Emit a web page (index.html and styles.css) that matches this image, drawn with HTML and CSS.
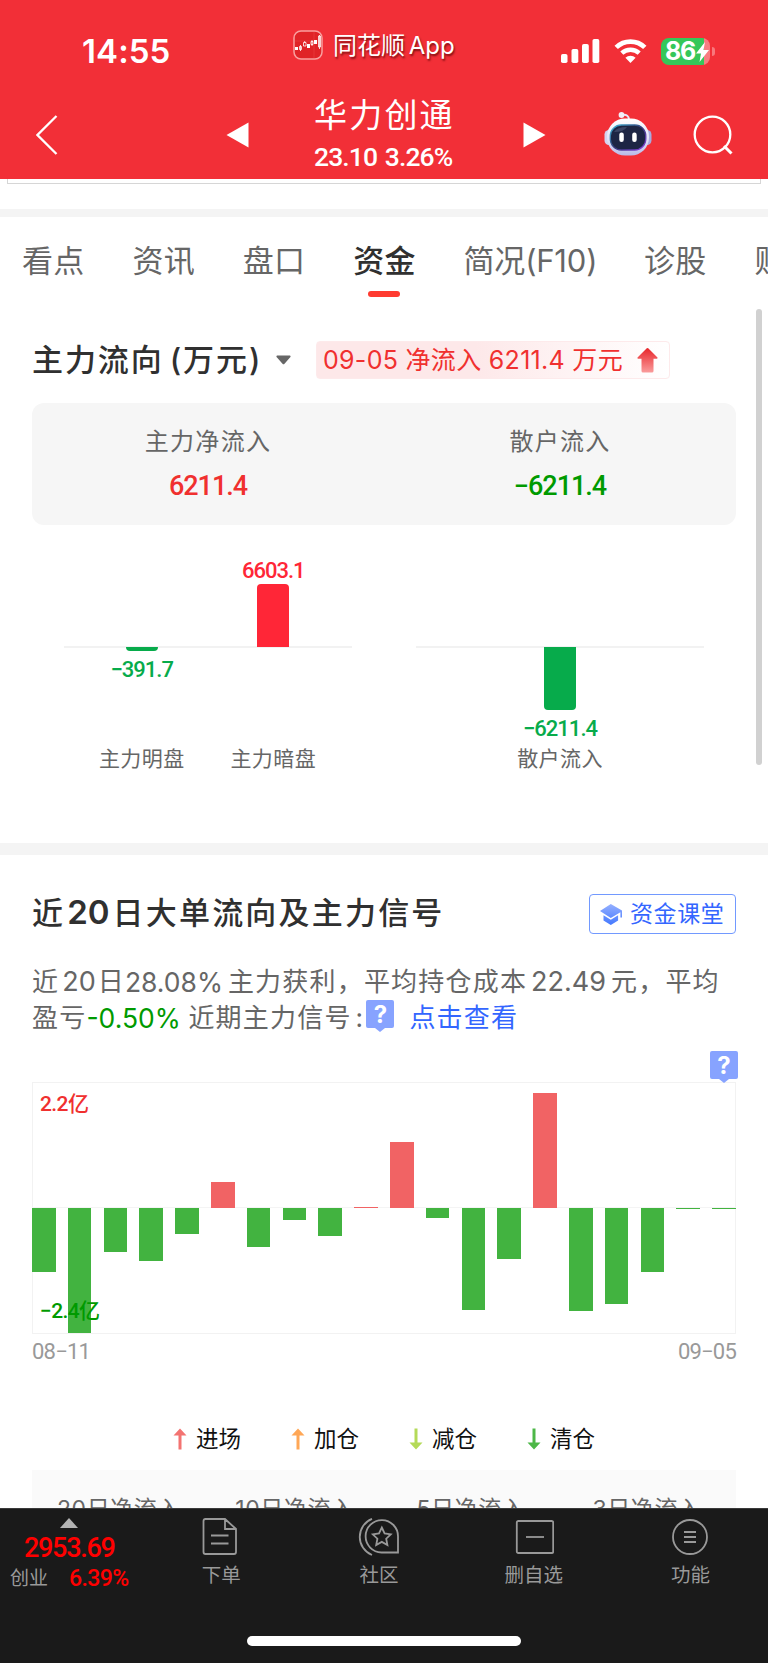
FILE: index.html
```html
<!DOCTYPE html>
<html lang="zh-CN">
<head>
  <meta charset="UTF-8" />
  <meta name="viewport" content="width=device-width, initial-scale=1.0"/>
  <title>华力创通 - 资金</title>
  <link rel="stylesheet" href="styles.css">
</head>
<body>

  <div class="header">
    <div class="status">
      <div class="time">14:55</div>
      <div class="app">
        <svg class="app-icon" width="30" height="30" viewBox="0 0 30 30">
          <rect x="1" y="1" width="28" height="28" rx="7" fill="#e02327" stroke="#f9a09f" stroke-width="1.5"/>
          <path d="M2 11H28M21 2V28" stroke="#ee4a48" stroke-width=".5"/>
          <path d="M2 17h3v3H2zM14 14h3v4h-3zM21 10h3v4h-3z" fill="#fff"/>
          <path d="M6.500 16.500h2v3h-2zM7.500 15v6M10.500 12.500h2.500v3.500h-2.500zM11.700 11v1.500M18 11.500h2v3h-2zM19 10v6M25.500 6h2v11h-2zM26.500 5v14" fill="none" stroke="#fff" stroke-width=".8"/>
        </svg>
        <span>同花顺 App</span>
      </div>
      <div class="signals">
        <svg width="39" height="26" viewBox="0 0 39 26" fill="#fff">
          <rect x="0" y="16" width="6.500" height="9" rx="1.800"/>
          <rect x="10.500" y="11" width="6.800" height="14" rx="1.800"/>
          <rect x="21" y="6" width="6.800" height="19" rx="1.800"/>
          <rect x="31.500" y="1" width="6.800" height="24" rx="1.800"/>
        </svg>
        <svg class="wifi" width="33" height="26" viewBox="0 0 33 26">
          <path d="M2.200 9.400a20.500 20.500 0 0 1 28.600 0" fill="none" stroke="#fff" stroke-width="4.800"/>
          <path d="M7.800 15.200a12.600 12.600 0 0 1 17.400 0" fill="none" stroke="#fff" stroke-width="4.400"/>
          <path d="M16.500 25l-5.100-5.200a7.300 7.300 0 0 1 10.200 0z" fill="#fff"/>
        </svg>
        <div class="battery">
          <span>86</span>
          <svg width="13" height="20" viewBox="0 0 13 20"><path d="M9 0L0 11.500h5L3.500 20 13 8H7.500z" fill="#fff"/></svg>
        </div>
        <div class="battery-tip"></div>
      </div>
    </div>

    <div class="nav">
      <svg class="back" width="22" height="40" viewBox="0 0 22 40"><path d="M20.500 1L1.500 20l19 19" fill="none" stroke="#fff" stroke-width="2.300"/></svg>
      <svg class="prev" width="23" height="26" viewBox="0 0 23 26"><path d="M22.500 .5v25L.5 13z" fill="#fff"/></svg>
      <div class="stock">
        <div class="stock-name">华力创通</div>
        <div class="stock-price">23.10 3.26%</div>
      </div>
      <svg class="next" width="23" height="26" viewBox="0 0 23 26"><path d="M.5 .5v25L22.500 13z" fill="#fff"/></svg>
      <svg class="robot" width="48" height="44" viewBox="0 0 48 44">
        <defs>
          <linearGradient id="shell" x1="0" y1="0" x2="0" y2="1">
            <stop offset="0" stop-color="#fff"/><stop offset=".6" stop-color="#dfe0f6"/><stop offset="1" stop-color="#b9b9e8"/>
          </linearGradient>
          <linearGradient id="rim" x1="0" y1="0" x2="1" y2="1">
            <stop offset="0" stop-color="#3fb8d8"/><stop offset=".5" stop-color="#343a78"/><stop offset="1" stop-color="#8a3fe0"/>
          </linearGradient>
        </defs>
        <path d="M18 3q7-1 7 5" fill="none" stroke="#e8e6f6" stroke-width="2"/>
        <circle cx="17.500" cy="3" r="2.900" fill="#f3eff8"/>
        <rect x=".5" y="18" width="9" height="15" rx="4.500" fill="#d4d2f0"/>
        <rect x="38.500" y="18" width="9" height="15" rx="4.500" fill="#aaaade"/>
        <rect x="3" y="6.500" width="42" height="37" rx="18" fill="url(#shell)"/>
        <rect x="6.300" y="13" width="35.500" height="25" rx="11" fill="#1d2544" stroke="url(#rim)" stroke-width="1.300"/>
        <path d="M10 20q3-5 13-5-3 5-13 5z" fill="#3b4565"/>
        <rect x="15.300" y="20.500" width="4.500" height="9.500" rx="2.200" fill="#fff"/>
        <rect x="28.200" y="20.500" width="4.500" height="9.500" rx="2.200" fill="#fff"/>
      </svg>
      <svg class="search" width="40" height="40" viewBox="0 0 40 40" fill="none" stroke="#fff">
        <circle cx="19.500" cy="19.500" r="17.800" stroke-width="2.300"/>
        <path d="M31 31L38.500 38.500" stroke-width="3"/>
      </svg>
    </div>
  </div>

  <div class="content">
    <div class="strip"></div>

    <div class="tabs">
      <span>看点</span>
      <span>资讯</span>
      <span>盘口</span>
      <span class="active">资金</span>
      <span class="wide">简况(F10)</span>
      <span>诊股</span>
      <span>财务</span>
    </div>

    <div class="section flow">
      <div class="flow-title">
        <h2>主力流向 (万元)</h2>
        <svg class="caret" width="15" height="10" viewBox="0 0 15 10"><path d="M1 .5h13q1.200 1 0 2L8.500 8.800q-1 1-2 0L1 2.500q-1.200-1 0-2z" fill="#666"/></svg>
        <div class="tag">
          <span>09-05 净流入 6211.4 万元</span>
          <svg width="21" height="25" viewBox="0 0 21 25">
            <defs><linearGradient id="up" x1="0" y1="0" x2="0" y2="1"><stop offset="0" stop-color="#e8252a"/><stop offset="1" stop-color="#fa9c9c"/></linearGradient></defs>
            <path d="M10.500 0q.6 0 1 .5l9 9q.4 1-.6 1.200H16.500V23q0 1.500-1.500 1.500H6Q4.500 24.500 4.500 23V10.700H1q-1-.2-.5-1.200l9-9q.4-.5 1-.5z" fill="url(#up)"/>
          </svg>
        </div>
      </div>

      <div class="card">
        <div>
          <p>主力净流入</p>
          <strong class="red">6211.4</strong>
        </div>
        <div>
          <p>散户流入</p>
          <strong class="green">−6211.4</strong>
        </div>
      </div>

      <div class="panels">
        <div class="panel">
          <div class="ups">
            <div></div>
            <div><span>6603.1</span><i style="height:63px"></i></div>
          </div>
          <div class="downs">
            <div><i style="height:4px"></i><span>−391.7</span></div>
            <div></div>
          </div>
          <div class="names"><div>主力明盘</div><div>主力暗盘</div></div>
        </div>
        <div class="panel">
          <div class="ups"></div>
          <div class="downs">
            <div><i style="height:63px"></i><span>−6211.4</span></div>
          </div>
          <div class="names"><div>散户流入</div></div>
        </div>
      </div>
    </div>

    <div class="section orders">
      <div class="orders-title">
        <h2>近<b class="num">20</b>日大单流向及主力信号</h2>
        <div class="lesson">
          <svg width="22" height="21" viewBox="0 0 22 21">
            <defs><linearGradient id="cap" x1="0" y1="0" x2="0" y2="1"><stop offset="0" stop-color="#95b0ff"/><stop offset="1" stop-color="#4378ff"/></linearGradient></defs>
            <path d="M10.800 0L22 6.500v7h-1.600V8.200L10.800 14 0 7z M3.500 11.300l7.300 4.400 7.300-4.400v5.200L10.800 21l-7.300-4.500z" fill="url(#cap)"/>
          </svg>
          <span>资金课堂</span>
        </div>
      </div>

      <div class="summary">
        <div>近<span class="num">20</span>日<span class="percent">28.08%</span>主力获利，平均持仓成本<span class="num cost">22.49</span>元，平均</div>
        <div>盈亏<span class="loss">-0.50%</span><span class="recent">近期主力信号<i>:</i></span><span class="help">?</span><a>点击查看</a></div>
      </div>

      <div class="chart">
        <span class="help chart-help">?</span>
        <div class="bars" id="bars"></div>
        <span class="max">2.2亿</span>
        <span class="min">−2.4亿</span>
      </div>
      <div class="dates"><span>08−11</span><span>09−05</span></div>

      <div class="legend">
        <div><svg width="14" height="22" viewBox="0 0 14 22"><path d="M7 .5L13.500 7.500H8.500V21.500h-3V7.500H.5z" fill="#f37371"/></svg>进场</div>
        <div><svg width="14" height="22" viewBox="0 0 14 22"><path d="M7 .5L13.500 7.500H8.500V21.500h-3V7.500H.5z" fill="#ffa756"/></svg>加仓</div>
        <div><svg width="14" height="22" viewBox="0 0 14 22"><path d="M7 21.500L.5 14.500H5.500V.5h3V14.500h5z" fill="#b4da58"/></svg>减仓</div>
        <div><svg width="14" height="22" viewBox="0 0 14 22"><path d="M7 21.500L.5 14.500H5.500V.5h3V14.500h5z" fill="#4db748"/></svg>清仓</div>
      </div>

      <div class="table">
        <div>20日净流入</div>
        <div>10日净流入</div>
        <div>5日净流入</div>
        <div>3日净流入</div>
      </div>
    </div>

    <div class="scrollbar"></div>
  </div>

  <div class="footer">
    <div class="menu">
      <div class="index">
        <svg width="18" height="10" viewBox="0 0 18 10"><path d="M9 0l9 10H0z" fill="#b3b3b3"/></svg>
        <div class="index-value">2953.69</div>
        <div class="index-row"><span>创业</span><b>6.39%</b></div>
      </div>
      <div class="item">
        <svg width="40" height="38" viewBox="0 0 40 38" fill="none" stroke="#999" stroke-width="1.800">
          <path d="M24 1H4.500Q2.500 1 2.500 3V34q0 2 2 2H33q2 0 2-2V11zM24 1V11H35M10 17.500H27.500M10 25.500H27.500"/>
        </svg>
        <span>下单</span>
      </div>
      <div class="item">
        <svg width="42" height="38" viewBox="0 0 42 38" fill="none" stroke="#999" stroke-width="1.800">
          <path d="M40 20.500V34.500H23.500A16.200 16.200 0 1 1 40 18.500z M14 .8A19.500 19.500 0 0 0 14 37"/>
          <path d="M23.800 9.500l2.800 5.900 6.200.9-4.600 4.400 1.200 6.300-5.600-3.100-5.600 3.100 1.200-6.300-4.600-4.400 6.200-.9z"/>
        </svg>
        <span>社区</span>
      </div>
      <div class="item">
        <svg width="40" height="38" viewBox="0 0 40 38" fill="none" stroke="#999" stroke-width="1.800">
          <rect x="2.800" y="3" width="36.400" height="32" rx="1.500"/><path d="M12 19H30"/>
        </svg>
        <span>删自选</span>
      </div>
      <div class="item">
        <svg width="40" height="38" viewBox="0 0 40 38" fill="none" stroke="#999" stroke-width="1.800">
          <circle cx="19" cy="19" r="17"/><path d="M13 14H25M13 19H25M13 24H25"/>
        </svg>
        <span>功能</span>
      </div>
    </div>
    <div class="home"></div>
  </div>

  <script>
    // bar lengths in px, above (+) or below (-) the zero line
    const flows = [-63.5, -125, -44, -52.5, -26, 26.5, -39, -11.5, -27.5, 1, 66, -9.5, -102, -51, 115.5, -103, -96, -63.5, -1, -1];

    document.getElementById('bars').innerHTML = flows.map(v =>
      `<div class="${v > 0 ? 'in' : 'out'}"><i style="height:${Math.abs(v)}px"></i></div>`
    ).join('');
  </script>
</body>
</html>
```

FILE: styles.css
```css
* {
  box-sizing: border-box;
}

body {
  font-family: Inter, "Noto Sans CJK SC", sans-serif;
  margin: 0;
  width: 768px;
  height: 1663px;
  overflow: hidden;
  background: #fff;
  color: #666;
  display: flex;
  flex-direction: column;
}

svg {
  display: block;
  flex: none;
}

p, h2 {
  margin: 0;
}

.red { color: #f0302f; }
.green { color: #009a00; }

/* header */
.header {
  background: #f22f37;
  color: #fff;
  height: 179px;
  flex: none;
}

.status {
  height: 92px;
  display: flex;
  align-items: flex-start;
}

.time {
  width: 212px;
  padding-left: 82px;
  padding-top: 31px;
  font-size: 33px;
  line-height: 40px;
  font-weight: 600;
  letter-spacing: 0.1px;
}

.app {
  display: flex;
  margin-left: 81px;
  margin-top: 30px;
  width: 268px;
  line-height: 31px;
  font-size: 24px;
  word-spacing: -3px;
  text-shadow: 1px 2px 2px rgba(80, 0, 0, 0.7);
}

.app span {
  margin-left: 10px;
}

.signals {
  display: flex;
  margin-top: 38px;
}

.wifi {
  margin-left: 14px;
}

.battery {
  margin-left: 14px;
  width: 49px;
  height: 27px;
  border-radius: 8px;
  background: linear-gradient(to right, #35c759 43px, #f87c81 43px);
  display: flex;
  align-items: center;
  padding-left: 4px;
  font-size: 25px;
  line-height: 27px;
  font-weight: 700;
  letter-spacing: -1.2px;
}

.battery svg {
  margin-left: 1px;
}

.battery-tip {
  margin: 9px 0 0 2px;
  width: 3px;
  height: 9px;
  border-radius: 0 3px 3px 0;
  background: #f8777c;
}

.nav {
  height: 87px;
  display: flex;
  align-items: flex-start;
}

.back { margin: 23px 0 0 36px; }
.prev { margin: 30px 0 0 168px; }
.next { margin: 30px 0 0 51px; }
.robot { margin: 20px 0 0 58px; }
.search { margin: 23px 0 0 41px; }

.stock {
  width: 158px;
  margin-left: 65px;
  white-space: nowrap;
}

.stock-name {
  font-size: 33px;
  line-height: 46px;
  letter-spacing: 2.2px;
}

.stock-price {
  font-family: Roboto, sans-serif;
  font-size: 26.5px;
  line-height: 42px;
  margin-top: -2px;
  font-weight: 500;
  letter-spacing: -0.9px;
  word-spacing: 2px;
}

/* page body */
.content {
  position: relative;
  flex: 1;
  min-height: 0;
  overflow: hidden;
}

.strip {
  height: 38px;
  border-bottom: 8px solid #f4f4f4;
  padding: 0 7px;
}

.strip::before {
  content: "";
  display: block;
  height: 4px;
  border: 1px solid #d6d6d6;
  border-top: none;
}

.tabs {
  display: flex;
  height: 87px;
  padding-left: 22px;
  font-size: 31px;
  line-height: 87px;
  white-space: nowrap;
}

.tabs span {
  flex: none;
  width: 110.4px;
  letter-spacing: 0.3px;
}

.tabs .wide {
  width: 180.5px;
  letter-spacing: -0.2px;
}

.tabs .active {
  position: relative;
  color: #303030;
  font-weight: 500;
}

.tabs .active::after {
  content: "";
  position: absolute;
  left: 15px;
  bottom: 7px;
  width: 32px;
  height: 6px;
  border-radius: 3px;
  background: #ff3b30;
}

.section {
  padding: 0 32px;
}

h2 {
  font-size: 31px;
  font-weight: 500;
  color: #303030;
  white-space: nowrap;
}

.flow {
  height: 551px;
  padding-top: 28px;
  border-bottom: 12px solid #f4f4f4;
}

.flow-title {
  display: flex;
  align-items: center;
  height: 56px;
  line-height: 38px;
}

.flow-title h2 {
  width: 244px;
  letter-spacing: 1.9px;
  word-spacing: -4px;
}

.tag {
  margin-left: 25px;
  width: 354px;
  height: 38px;
  padding-left: 6px;
  border: 1px solid #fdeaeb;
  border-radius: 4px;
  background: linear-gradient(to right, #fde8e9 45%, #fff);
  display: flex;
  align-items: center;
  font-size: 25px;
  line-height: 35px;
  letter-spacing: 0.3px;
  color: #f0302f;
  white-space: nowrap;
}

.tag span {
  width: 314px;
}

.card {
  display: flex;
  height: 122px;
  margin-top: 14.5px;
  padding-top: 21px;
  border-radius: 12px;
  background: #f6f6f6;
  text-align: center;
}

.card div {
  flex: 1;
}

.card p {
  font-size: 24px;
  line-height: 36px;
  letter-spacing: 1.3px;
}

.card strong {
  font-family: Roboto, sans-serif;
  font-size: 27px;
  line-height: 52px;
  font-weight: 500;
  letter-spacing: -1px;
  display: block;
}

.panels {
  display: flex;
  font-size: 21px;
}

.panel {
  flex: 1;
  padding: 0 32px;
}

.ups, .downs, .names {
  display: flex;
  padding: 0 13px 0 12px;
  text-align: center;
}

.panel + .panel > div {
  padding: 0 13px;
}

.ups > div, .downs > div, .names > div {
  flex: 1;
  display: flex;
  flex-direction: column;
  align-items: center;
}

.ups {
  height: 123px;
  border-bottom: 2px solid #f2f2f2;
}

.ups > div {
  justify-content: flex-end;
  margin-bottom: -1px;
}

.panel span {
  font-family: Roboto, sans-serif;
  font-size: 22px;
  line-height: 26px;
  font-weight: 500;
  letter-spacing: -1px;
}

.panel i {
  width: 32px;
  flex: none;
}

.ups i {
  background: #ff2637;
  border-radius: 4px 4px 0 0;
}

.ups span {
  color: #ff2637;
}

.downs {
  height: 97px;
  margin-top: -1px;
}

.downs i {
  background: #07ab4b;
  border-radius: 0 0 4px 4px;
  margin-bottom: 6px;
}

.downs span {
  color: #07ab4b;
}

.names {
  line-height: 30px;
  letter-spacing: 0.4px;
}

.orders {
  padding-top: 39px;
}

.orders-title {
  display: flex;
  justify-content: space-between;
  height: 40px;
}

.orders-title h2 {
  line-height: 36px;
  letter-spacing: 2.2px;
}

.orders-title .num {
  font-size: 33px;
  font-weight: 600;
  margin: 0 3px 0 2px;
  letter-spacing: 0;
}

.lesson {
  width: 147px;
  border: 1.500px solid #7299ff;
  border-radius: 4px;
  display: flex;
  align-items: center;
  padding-left: 10px;
  font-size: 23px;
  line-height: 36px;
  color: #3366ff;
  white-space: nowrap;
}

.lesson span {
  margin-left: 8px;
  letter-spacing: 0.6px;
}

.summary {
  margin-top: 30px;
  font-size: 26px;
  line-height: 36px;
  letter-spacing: 1.2px;
  white-space: nowrap;
}

.summary > div {
  display: flex;
  height: 36px;
}

.summary .num {
  margin: 0 2px 0 3px;
  letter-spacing: 0;
  font-size: 27px;
}

.summary .cost {
  margin: 0 5px 0 4px;
}

.percent {
  width: 103px;
  font-size: 26.5px;
  letter-spacing: 0;
}

.loss {
  color: #009a00;
  width: 102px;
  font-size: 26.5px;
  letter-spacing: 0;
}

.recent {
  width: 178px;
}

.recent i {
  font-style: normal;
  margin-left: 4px;
}

.summary a {
  color: #3366ff;
  margin-left: 15px;
}

.help {
  position: relative;
  width: 28px;
  height: 28px;
  border-radius: 2px;
  background: #87a3ff;
  color: #fff;
  font-size: 24px;
  line-height: 29px;
  font-weight: 700;
  letter-spacing: 0;
  text-align: center;
}

.help::after {
  content: "";
  position: absolute;
  left: 9px;
  top: 28px;
  border: 5px solid transparent;
  border-top: 4px solid #87a3ff;
  border-bottom: none;
}

.chart {
  position: relative;
  height: 252px;
  margin-top: 46px;
  border: 1px solid #f2f2f2;
}

.chart-help {
  position: absolute;
  right: -3px;
  top: -32px;
}

.bars {
  display: flex;
  justify-content: space-between;
  height: 250px;
  margin: 0 -1px;
  background: linear-gradient(#f4f4f4, #f4f4f4) 0 124px / 100% 1px no-repeat;
}

.bars div {
  width: 23.7px;
  display: flex;
  flex-direction: column;
}

.bars .in {
  height: 125px;
  justify-content: flex-end;
}

.bars .out {
  padding-top: 125px;
}

.in i { background: #f16364; }
.out i { background: #42b340; }

.max, .min {
  position: absolute;
  left: 7px;
  font-family: Roboto, "Noto Sans CJK SC", sans-serif;
  font-size: 21px;
  line-height: 24px;
  font-weight: 500;
  letter-spacing: -0.6px;
}

.max {
  top: 9px;
  color: #f0302f;
}

.min {
  bottom: 10px;
  color: #009a00;
}

.dates {
  display: flex;
  justify-content: space-between;
  font-family: Roboto, sans-serif;
  font-size: 22px;
  line-height: 36px;
  letter-spacing: -0.8px;
  color: #999;
}

.legend {
  display: flex;
  margin-top: 53px;
  padding-left: 141px;
  height: 32px;
  line-height: 32px;
  align-items: center;
  font-size: 22.5px;
  color: #111;
}

.legend div {
  width: 118px;
  display: flex;
  align-items: center;
}

.legend svg {
  margin-right: 9px;
}

.table {
  display: flex;
  margin-top: 15px;
  padding-top: 23px;
  height: 60px;
  background: #fafafa;
  font-size: 23px;
  line-height: 32px;
  letter-spacing: 0.6px;
  text-align: center;
}

.table div {
  flex: 1;
  padding-right: 2px;
}

.scrollbar {
  position: absolute;
  right: 6px;
  top: 130px;
  width: 6px;
  height: 456px;
  border-radius: 3px;
  background: #d1d1d1;
}

/* bottom bar */
.footer {
  height: 155px;
  flex: none;
  background: #1a1a1a;
  border-top: 1px solid #3a3a3a;
  color: #999;
}

.menu {
  display: flex;
  height: 127px;
}

.index {
  width: 144px;
}

.index svg {
  margin: 9px 0 0 60px;
}

.index-value {
  font-family: Roboto, sans-serif;
  font-size: 27px;
  line-height: 40px;
  padding-left: 24px;
  color: #f00;
  font-weight: 500;
  letter-spacing: -1.3px;
}

.index-row {
  display: flex;
  padding-left: 10px;
  font-size: 19px;
  line-height: 22px;
}

.index-row b {
  margin-left: 21px;
  font-family: Roboto, sans-serif;
  font-size: 23px;
  font-weight: 500;
  letter-spacing: -0.6px;
  color: #f00;
}

.item {
  flex: 1;
  display: flex;
  flex-direction: column;
  align-items: center;
  padding-top: 9px;
  font-size: 19.5px;
}

.item:nth-child(3) {
  padding-left: 3px;
}

.item:nth-child(4) {
  padding-right: 2px;
}

.item span {
  line-height: 38px;
}

.home {
  width: 274px;
  height: 10px;
  border-radius: 5px;
  background: #fff;
  margin: 0 auto;
}
```
